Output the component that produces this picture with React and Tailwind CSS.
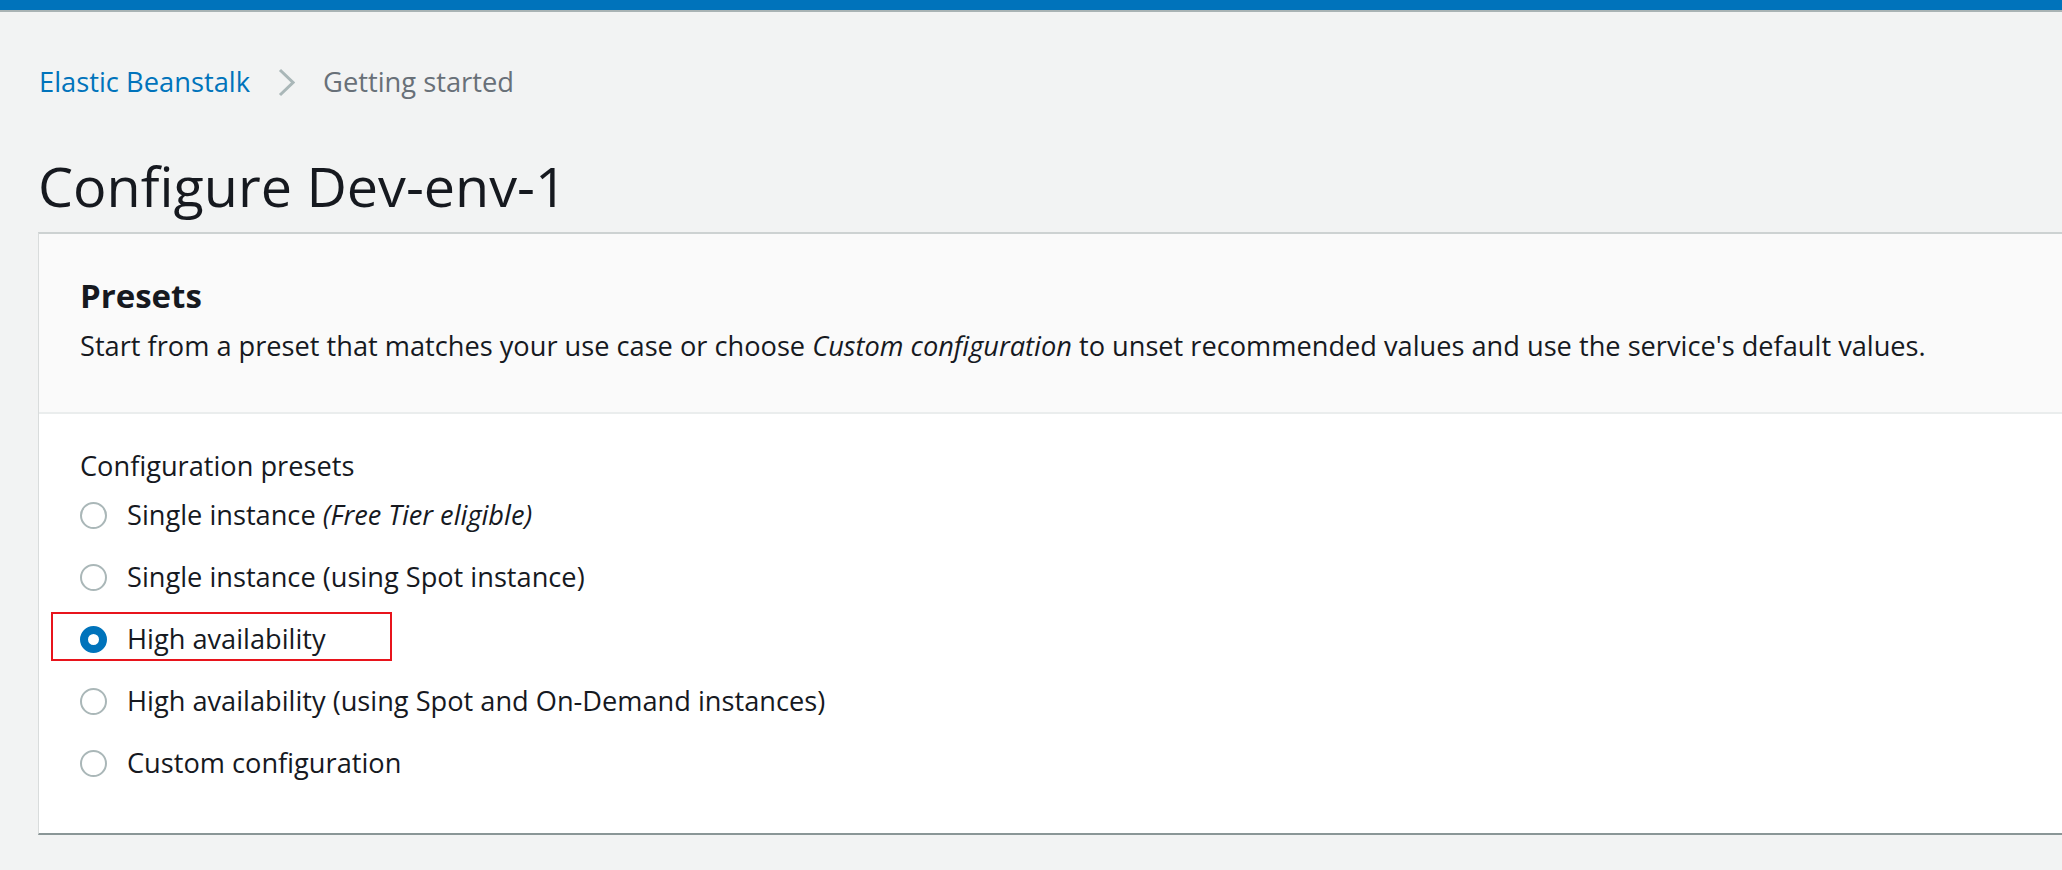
import React from "react";

const presets = [
  { id: "single", label: "Single instance", note: "(Free Tier eligible)" },
  { id: "single-spot", label: "Single instance (using Spot instance)" },
  { id: "ha", label: "High availability", highlight: true },
  { id: "ha-spot", label: "High availability (using Spot and On-Demand instances)" },
  { id: "custom", label: "Custom configuration" },
];

const Radio = ({ checked }) =>
  checked ? (
    <span className="block h-[27px] w-[27px] shrink-0 rounded-full border-[8px] border-[#0073bb] bg-white" />
  ) : (
    <span className="block h-[27px] w-[27px] shrink-0 rounded-full border-2 border-[#aab7b8] bg-white" />
  );

const App = () => {
  const selected = "ha";

  return (
    <div className="min-h-screen bg-[#f2f3f3] text-[#16191f] font-['Open_Sans',sans-serif]">
      <div className="h-[10px] bg-[#0073bb] border-b-2 border-[#a9b3b4] box-content" />

      <nav className="flex items-center pl-[39px] pt-[52px] h-[36px] box-content text-[27.3px] leading-[36px]">
        <a href="#" className="text-[#0073bb]">
          Elastic Beanstalk
        </a>
        <svg className="mx-[28px]" width="17" height="29" viewBox="0 0 17 29" fill="none">
          <path d="M2 2 L15 14.5 L2 27" stroke="#aab7b8" strokeWidth="3" />
        </svg>
        <span className="text-[#687078]">Getting started</span>
      </nav>

      <h1 className="mt-[53px] pl-[38px] text-[55.7px] leading-[64px] font-normal">
        Configure Dev-env-1
      </h1>

      <div className="mt-[15px] ml-[38px] bg-white border-t-2 border-t-[#cdd2d2] border-b-2 border-b-[#8a9697] border-l border-l-[#d9dcdc]">
        <div className="bg-[#fafafa] px-[41px] pt-[42px] pb-[48px] border-b-2 border-[#eaeded]">
          <h2 className="text-[33px] leading-[40px] font-bold">Presets</h2>
          <p className="mt-[12px] text-[27.2px] leading-[36px]">
            Start from a preset that matches your use case or choose{" "}
            <i>Custom configuration</i> to unset recommended values and use the service's default
            values.
          </p>
        </div>

        <div className="px-[41px] pt-[34px] pb-[46px]">
          <div className="text-[27.2px] leading-[36px]">Configuration presets</div>
          <div className="mt-[7px] flex flex-col gap-[14px]">
            {presets.map((p) => (
              <label key={p.id} className="relative flex h-[48px] items-center gap-[20px] text-[27.2px]">
                <Radio checked={p.id === selected} />
                <span>
                  {p.label}
                  {p.note && <i> {p.note}</i>}
                </span>
                {p.highlight && (
                  <span className="absolute left-[-29px] top-[-3px] h-[49px] w-[341px] border-2 border-[#e8141c]" />
                )}
              </label>
            ))}
          </div>
        </div>
      </div>
    </div>
  );
};

export default App;
